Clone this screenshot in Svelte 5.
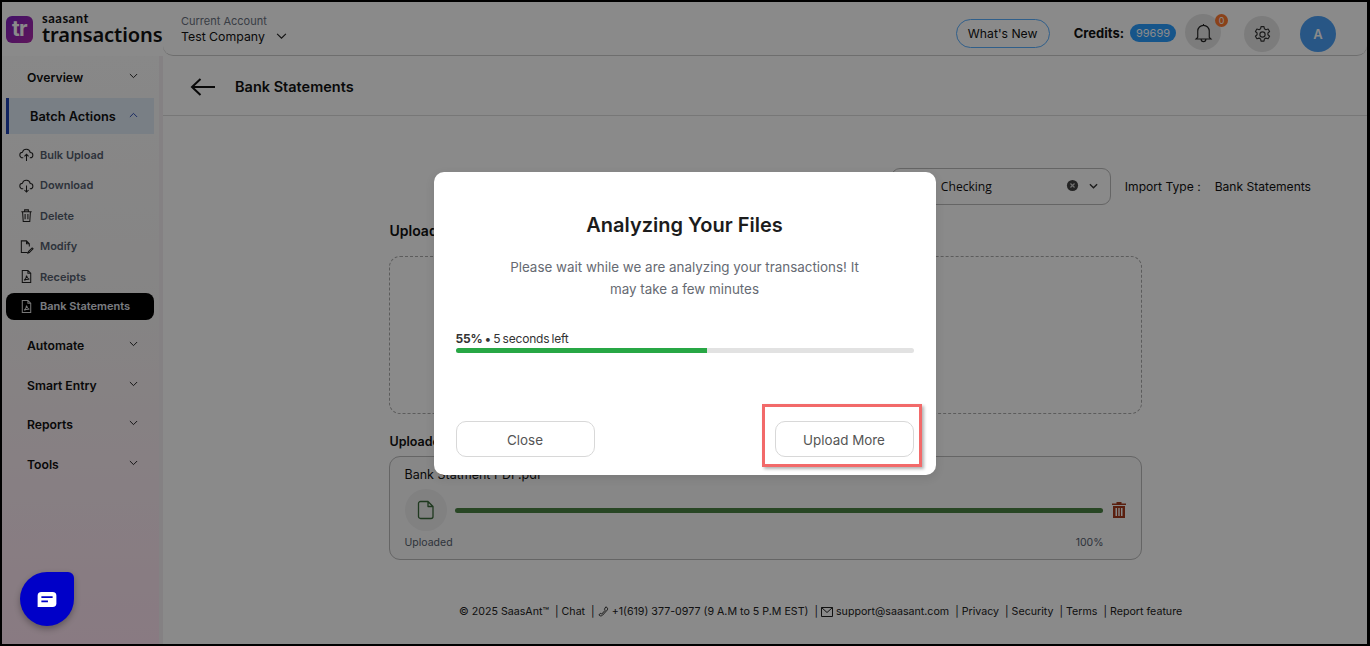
<script lang="ts">
	const subItems = [
		{ label: 'Bulk Upload', icon: 'upload' },
		{ label: 'Download', icon: 'download' },
		{ label: 'Delete', icon: 'trash' },
		{ label: 'Modify', icon: 'modify' },
		{ label: 'Receipts', icon: 'pdf' },
		{ label: 'Bank Statements', icon: 'pdf', active: true }
	];
	const lowerItems = ['Automate', 'Smart Entry', 'Reports', 'Tools'];
	const footerLinks = ['Privacy', 'Security', 'Terms', 'Report feature'];
	const progress = 55;
</script>

{#snippet chevron(up = false)}
	<svg class="chev" viewBox="0 0 10 6" width="9" height="6" fill="none" stroke="currentColor" stroke-width="1">
		<path d={up ? 'M1 5.2 5 1.2l4 4' : 'M1 .8l4 4 4-4'} />
	</svg>
{/snippet}

<div class="frame">
	<header class="topbar">
		<div class="brand">
			<div class="logo-mark">tr</div>
			<div class="logo-text">
				<span class="logo-small">saasant</span>
				<span class="logo-big">transactions</span>
			</div>
		</div>
		<div class="topbar-main">
			<div class="account">
				<span class="account-label">Current Account</span>
				<span class="account-name">
					Test Company
					<svg viewBox="0 0 12 8" width="11" height="7" fill="none" stroke="#222" stroke-width="1.3"><path d="M1 1l5 5 5-5" /></svg>
				</span>
			</div>
			<div class="top-actions">
				<button class="whats-new">What's New</button>
				<span class="credits">Credits:</span>
				<span class="credit-badge">99699</span>
				<span class="round bell">
					<svg viewBox="0 0 24 24" width="23" height="23" fill="none" stroke="#222" stroke-width="1.2">
						<path d="M6 17V10.500a6 6 0 0 1 12 0V17l1.800 1.800H4.200L6 17ZM12 4.500V3M9.500 19a2.500 2.500 0 0 0 5 0" />
					</svg>
					<span class="notif">0</span>
				</span>
				<span class="round gear">
					<svg viewBox="0 0 24 24" width="21" height="21" fill="none" stroke="#333" stroke-width="1.3" stroke-linejoin="round">
						<path d="M10.300 3h3.400l.5 2.500 1.700 1 2.500-.8 1.700 2.900-1.900 1.700v2l1.900 1.700-1.700 2.900-2.500-.8-1.700 1-.5 2.500h-3.400l-.5-2.500-1.700-1-2.500.8-1.700-2.900 1.900-1.700v-2L3.900 8.600l1.700-2.900 2.500.8 1.700-1z" />
						<circle cx="12" cy="12" r="3" />
					</svg>
				</span>
				<span class="avatar">A</span>
			</div>
		</div>
	</header>

	<div class="body">
		<aside class="sidebar">
			<div class="nav-head first">Overview {@render chevron()}</div>
			<div class="nav-head open">Batch Actions {@render chevron(true)}</div>
			<ul class="sub-list">
				{#each subItems as item}
					<li class="sub-item" class:active={item.active}>
						<svg viewBox="0 0 16 16" width="15" height="15" fill="none" stroke="currentColor" stroke-width="1.100">
							{#if item.icon === 'upload'}
								<path d="M4.500 11.500H4a3 3 0 0 1-.3-6 4.300 4.300 0 0 1 8.300.4 2.800 2.800 0 0 1 0 5.600h-.5M8 15V8M5.800 10 8 7.800l2.200 2.200" />
							{:else if item.icon === 'download'}
								<path d="M4.500 11.500H4a3 3 0 0 1-.3-6 4.300 4.300 0 0 1 8.300.4 2.800 2.800 0 0 1 0 5.600h-.5M8 8v7M5.800 12.800 8 15l2.200-2.200" />
							{:else if item.icon === 'trash'}
								<path d="M2.500 4h11M6 4V2h4v2M3.800 4l.7 10.500h7L12.200 4M6.500 6.500v5.500M9.500 6.500v5.500" />
							{:else if item.icon === 'modify'}
								<path d="M11 8V5L8 2H2.500v12.500H9M8 2v3h3M10 13.500l4-4 1 1-4 4-1.500.5z" />
							{:else}
								<path d="M3.500 1.500H9.500L12.500 4.500V14.500H3.500zM9.500 1.500V4.500H12.500M5.500 12c1.500-1 2.500-3 2.500-5 .5 2 1.500 3.500 3 4-2-.2-4 .2-5.500 1Z" />
							{/if}
						</svg>
						<span>{item.label}</span>
					</li>
				{/each}
			</ul>
			<div class="lower">
				{#each lowerItems as label}
					<div class="nav-head">{label} {@render chevron()}</div>
				{/each}
			</div>
		</aside>

		<main class="content">
			<div class="page-title">
				<svg viewBox="0 0 26 20" width="26" height="20" fill="none" stroke="#111" stroke-width="2"><path d="M25 10H2M10.500 2 2 10l8.500 8" /></svg>
				<h1>Bank Statements</h1>
			</div>

			<div class="form-row">
				<div class="select">
					<span>Checking</span>
					<svg class="clear" viewBox="0 0 14 14" width="13" height="13">
						<circle cx="7" cy="7" r="6" fill="#444" />
						<path d="M4.800 4.800l4.400 4.400M9.200 4.800 4.800 9.200" stroke="#ccc" stroke-width="1.300" />
					</svg>
					<svg viewBox="0 0 10 6" width="9" height="6" fill="none" stroke="#333" stroke-width="1.500"><path d="M1 1l4 4 4-4" /></svg>
				</div>
				<span class="import-label">Import Type :</span>
				<span class="import-value">Bank Statements</span>
			</div>

			<div class="column">
				<h2 class="upload-title">Upload File</h2>
				<div class="dropzone"></div>
				<h2 class="uploaded-title">Uploaded File</h2>
				<div class="file-card">
					<div class="file-name">Bank Statment PDF.pdf</div>
					<div class="file-row">
						<span class="file-icon">
							<svg viewBox="0 0 18 20" width="18" height="20" fill="none" stroke="#3a6a3a" stroke-width="1.300" stroke-linejoin="round">
								<path d="M3.500 1.500H11L16 6.500V16.500a2 2 0 0 1-2 2H3.500a2 2 0 0 1-2-2V3.500a2 2 0 0 1 2-2ZM11 1.500V6.500H16" />
							</svg>
						</span>
						<span class="file-bar"></span>
						<svg class="file-trash" viewBox="0 0 14 16" width="14" height="16" fill="#a63a1c">
							<path d="M4.500 0h5v1.500H14V3H0V1.500h4.500zM1 4h12v12H1zM3.500 6v8H5V6zM6.300 6v8h1.400V6zM9 6v8h1.500V6z" fill-rule="evenodd" />
						</svg>
					</div>
					<div class="file-status">
						<span>Uploaded</span>
						<span>100%</span>
					</div>
				</div>
			</div>

			<footer class="footer">
				<span>© 2025 SaasAnt™ &nbsp;| Chat &nbsp;|</span>
				<svg viewBox="0 0 12 12" width="11" height="11" fill="none" stroke="#222" stroke-width="1"><path d="M8.500 1c2 .5 2.500 2 1.500 3.500L5 10c-1.500 1.300-3.500 1-4-.5L3 8l1 .8L8 4.500 7 3.500z" /></svg>
				<span class="phone">+1(619) 377-0977 (9 A.M to 5 P.M EST) &nbsp;|</span>
				<svg viewBox="0 0 12 10" width="12" height="10" fill="none" stroke="#222" stroke-width="1"><path d="M.5.500h11v9H.5zM.5.500 6 5.500 11.500.5" /></svg>
				<span>support@saasant.com</span>
				{#each footerLinks as link}
					<span class="foot-link">| {link}</span>
				{/each}
			</footer>
		</main>
	</div>

	<div class="overlay">
		<div class="modal">
			<h2>Analyzing Your Files</h2>
			<p class="modal-text">Please wait while we are analyzing your transactions! It may take a few minutes</p>
			<div class="progress-label"><b>55%</b> • 5 seconds left</div>
			<div class="track"><div class="fill" style="width: {progress}%"></div></div>
			<div class="modal-actions">
				<button class="modal-btn">Close</button>
				<span class="highlighted">
					<button class="modal-btn">Upload More</button>
					<span class="red-box"></span>
				</span>
			</div>
		</div>
	</div>

	<button class="chat" aria-label="Chat">
		<svg viewBox="0 0 20 16" width="20" height="15">
			<path d="M4 0h12a4 4 0 0 1 4 4v8a4 4 0 0 1-4 4H0V4a4 4 0 0 1 4-4Z" fill="#fff" />
			<path d="M4 5.500h12M4 10h7" stroke="#0000c8" stroke-width="2" />
		</svg>
	</button>
</div>

<style>
	:global(body) {
		margin: 0;
		font-family: 'Inter', 'Liberation Sans', sans-serif;
		background: #fff;
	}

	.frame {
		position: relative;
		box-sizing: border-box;
		width: 1370px;
		height: 646px;
		border: 2px solid #000;
		border-right-width: 3px;
		display: flex;
		flex-direction: column;
		overflow: hidden;
		color: #111;
	}

	.topbar {
		display: flex;
		height: 54px;
		flex-shrink: 0;
	}

	.brand {
		width: 161px;
		display: flex;
		align-items: center;
		gap: 9px;
		padding-left: 4px;
		box-sizing: border-box;
	}

	.logo-mark {
		width: 27px;
		height: 27px;
		margin-top: 1px;
		border-radius: 6px;
		background: linear-gradient(135deg, #7a1fc0, #b02aa8);
		color: #fff;
		font-size: 21px;
		font-weight: 700;
		line-height: 25px;
		text-align: center;
		flex-shrink: 0;
		letter-spacing: -0.5px;
	}

	.logo-text {
		display: flex;
		flex-direction: column;
		margin-top: -1px;
	}

	.logo-small {
		font-family: 'Lato', sans-serif;
		font-size: 13px;
		line-height: 11px;
		font-weight: 700;
		letter-spacing: 0.5px;
	}

	.logo-big {
		font-family: 'Noto Sans', sans-serif;
		font-size: 20.100px;
		line-height: 21px;
		font-weight: 600;
		letter-spacing: -0.1px;
	}

	.topbar-main {
		flex: 1;
		display: flex;
		justify-content: space-between;
		align-items: center;
		padding: 0 31px 0 18px;
		border-bottom: 1px solid #ccc;
		border-radius: 0 0 10px 10px;
	}

	.account {
		display: flex;
		flex-direction: column;
		gap: 1px;
		margin-top: 0;
	}

	.account-label {
		font-size: 11px;
		color: #6a7280;
	}

	.account-name {
		font-size: 12.300px;
		display: flex;
		align-items: center;
		gap: 11px;
	}

	.top-actions {
		display: flex;
		align-items: center;
		margin-top: 9px;
	}

	.whats-new {
		width: 94px;
		height: 29px;
		border: 1px solid #5ab0ff;
		border-radius: 15px;
		background: none;
		color: #111;
		font: 12.200px 'Inter', sans-serif;
		margin-right: 24px;
		padding: 0;
	}

	.credits {
		font-size: 13px;
		font-weight: 700;
		margin-right: 6px;
	}

	.credit-badge {
		width: 46px;
		height: 18px;
		border-radius: 9px;
		background: #2a9dff;
		color: #fff;
		font-size: 11px;
		line-height: 18px;
		text-align: center;
		margin-right: 9px;
	}

	.round {
		position: relative;
		width: 36px;
		height: 36px;
		border-radius: 50%;
		background: #e6e6e6;
		display: flex;
		align-items: center;
		justify-content: center;
	}

	.bell {
		margin-right: 23px;
		margin-top: -2px;
	}

	.gear {
		margin-right: 20px;
		margin-top: 2px;
	}

	.notif {
		position: absolute;
		top: 0;
		right: -7px;
		width: 13px;
		height: 13px;
		border-radius: 50%;
		background: #ff7a30;
		color: #fff;
		font-size: 9px;
		line-height: 13px;
		text-align: center;
	}

	.avatar {
		width: 36px;
		height: 36px;
		margin-top: 2px;
		border-radius: 50%;
		background: #4a9ff5;
		color: #fff;
		font-size: 13px;
		font-weight: 600;
		line-height: 36px;
		text-align: center;
	}

	.body {
		flex: 1;
		display: flex;
		min-height: 0;
	}

	.sidebar {
		width: 157px;
		flex-shrink: 0;
		border-right: 4px solid #f4eff2;
		background: linear-gradient(180deg, #fbfbfb 0%, #f6f4f4 45%, #fde2f0 100%);
		font-size: 12.200px;
	}

	.nav-head {
		height: 40px;
		display: flex;
		align-items: center;
		justify-content: space-between;
		padding: 0 21px 0 25px;
		font-weight: 600;
	}

	.nav-head.first {
		height: 42px;
	}

	.nav-head .chev {
		margin-top: -3px;
	}

	.nav-head.open {
		box-sizing: border-box;
		width: 148px;
		height: 36px;
		margin-left: 4px;
		padding: 0 16px 0 21px;
		border-left: 3px solid #1d3fb0;
		background: #e0eaf6;
		font-size: 12.800px;
	}

	.nav-head.open .chev {
		color: #1d3fb0;
	}

	.sub-list {
		list-style: none;
		margin: 0;
		padding: 5.500px 0 0 4px;
	}

	.sub-item {
		box-sizing: border-box;
		width: 148px;
		height: 30.500px;
		display: flex;
		align-items: center;
		gap: 6px;
		padding-left: 13px;
		font-size: 11px;
		font-weight: 600;
		color: #555e6e;
	}

	.sub-item svg {
		color: #222;
		flex-shrink: 0;
	}

	.sub-item.active {
		height: 27px;
		margin-top: 0.500px;
		border-radius: 8px;
		background: #000;
		color: #e2e6ee;
	}

	.sub-item.active svg {
		color: #ddd;
	}

	.lower {
		margin-top: 6.500px;
	}

	.lower .nav-head {
		height: 39.500px;
	}

	.content {
		flex: 1;
		position: relative;
		display: flex;
		flex-direction: column;
		min-width: 0;
	}

	.page-title {
		height: 60px;
		box-sizing: border-box;
		display: flex;
		align-items: center;
		gap: 19px;
		padding: 2px 0 0 27px;
		border-bottom: 1px solid #ddd;
	}

	.page-title h1 {
		margin: 0;
		font-size: 14.500px;
		font-weight: 600;
	}

	.form-row {
		display: flex;
		justify-content: flex-end;
		align-items: center;
		margin-top: 51px;
		height: 38px;
		padding-right: 56px;
		font-size: 12.100px;
	}

	.select {
		box-sizing: border-box;
		width: 220px;
		height: 37px;
		margin-right: 14px;
		padding: 0 12px 0 49px;
		border: 1px solid #bbb;
		border-radius: 9px;
		display: flex;
		align-items: center;
		font-family: 'Open Sans', sans-serif;
	}

	.select span {
		flex: 1;
	}

	.clear {
		margin-right: 10px;
		margin-top: -2px;
	}

	.import-label {
		margin-right: 14px;
	}

	.column {
		width: 753px;
		margin: 0 auto;
	}

	.upload-title,
	.uploaded-title {
		margin: 0 0 0 1px;
		font-size: 14px;
		font-weight: 600;
	}

	.upload-title {
		margin-top: 17px;
	}

	.uploaded-title {
		margin-top: 20px;
		font-size: 12.500px;
	}

	.dropzone {
		height: 158px;
		margin-top: 17px;
		box-sizing: border-box;
		border: 1px dashed #aaa;
		border-radius: 11px;
	}

	.file-card {
		box-sizing: border-box;
		height: 104px;
		margin-top: 7px;
		padding: 10px 15px 0;
		border: 1px solid #bbb;
		border-radius: 11px;
		background: #f9f9fa;
	}

	.file-name {
		font-size: 12.500px;
	}

	.file-row {
		display: flex;
		align-items: center;
		margin-top: 7px;
	}

	.file-icon {
		width: 42px;
		height: 42px;
		border-radius: 50%;
		background: #eeeeee;
		display: flex;
		align-items: center;
		justify-content: center;
		flex-shrink: 0;
	}

	.file-bar {
		flex: 1;
		height: 5px;
		margin: 0 9px 0 8px;
		border-radius: 3px;
		background: #4a8244;
	}

	.file-status {
		display: flex;
		justify-content: space-between;
		margin-top: 5px;
		padding-right: 22px;
		font-size: 10.500px;
		color: #56606e;
	}

	.footer {
		position: absolute;
		left: 296px;
		top: 549px;
		display: flex;
		align-items: center;
		gap: 3px;
		font-size: 10.660px;
		white-space: nowrap;
		color: #222;
	}

	.foot-link {
		margin-left: 3px;
	}

	.overlay {
		position: absolute;
		inset: 0;
		background: rgba(0, 0, 0, 0.46);
		display: flex;
		align-items: center;
		justify-content: center;
	}

	.modal {
		box-sizing: border-box;
		width: 502px;
		height: 303px;
		padding: 0 22px;
		border-radius: 10px;
		background: #fff;
		box-shadow: 0 3px 10px rgba(0, 0, 0, 0.1);
		display: flex;
		flex-direction: column;
	}

	.modal h2 {
		margin: 41px 0 0;
		font-size: 20px;
		line-height: 24px;
		font-weight: 600;
		text-align: center;
		color: #1c1c1c;
	}

	.modal-text {
		width: 370px;
		margin: 19px auto 0;
		font-size: 13.400px;
		line-height: 22.500px;
		text-align: center;
		color: #666a72;
	}

	.progress-label {
		margin-top: 30px;
		font-size: 12px;
		line-height: 16px;
		letter-spacing: -0.2px;
		word-spacing: -1px;
		color: #333;
	}

	.track {
		height: 5px;
		margin-top: 1px;
		border-radius: 3px;
		background: #e2e2e2;
		overflow: hidden;
	}

	.fill {
		height: 100%;
		background: #28a745;
	}

	.modal-actions {
		display: flex;
		justify-content: space-between;
		margin-top: 68px;
	}

	.highlighted {
		position: relative;
		display: block;
	}

	.modal-btn {
		box-sizing: border-box;
		display: block;
		width: 139px;
		height: 36px;
		border: 1px solid #d8d8d8;
		border-radius: 10px;
		background: #fff;
		color: #555;
		font: 13.400px 'Inter', sans-serif;
		padding: 2px 0 0;
	}

	.red-box {
		position: absolute;
		inset: -17px -8px -10px -13px;
		border: 3px solid #f26a6a;
		box-shadow: 2px 2px 3px rgba(0, 0, 0, 0.3);
		pointer-events: none;
	}

	.chat {
		position: absolute;
		left: 18px;
		top: 570px;
		width: 54px;
		height: 54px;
		padding: 0;
		border: none;
		border-radius: 50% 6px 50% 50%;
		background: #0000c8;
		box-shadow: 0 3px 6px rgba(0, 0, 0, 0.3);
		display: flex;
		align-items: center;
		justify-content: center;
	}
</style>
